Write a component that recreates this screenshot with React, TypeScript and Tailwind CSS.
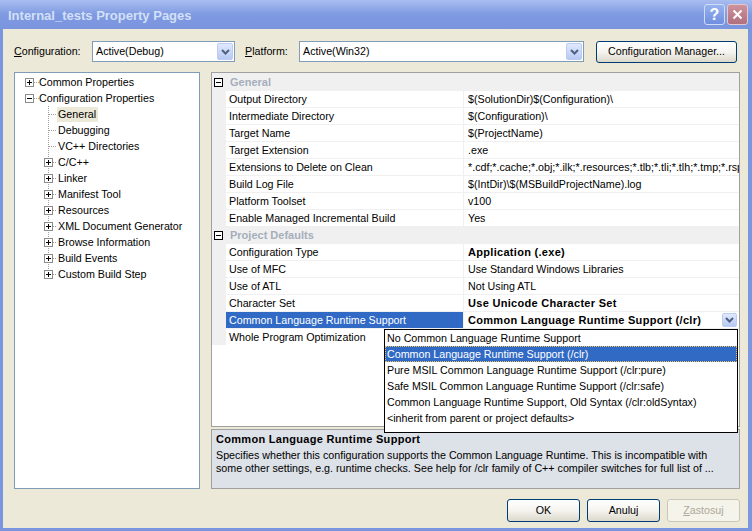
import React from "react";

function Chevron() {
  return (
    <svg width="9" height="6" viewBox="0 0 9 6">
      <path d="M1 1 L4.5 4.5 L8 1" fill="none" stroke="#4d6185" strokeWidth="2" />
    </svg>
  );
}

function TreeRow({
  label,
  level,
  box,
  selected,
  last,
}: {
  label: string;
  level: number;
  box?: "plus" | "minus";
  selected?: boolean;
  last?: boolean;
}) {
  if (level === 0) {
    return (
      <div className="flex h-[16px] items-center">
        <svg width="24" height="16" viewBox="0 0 24 16" className="shrink-0">
          <path d="M19 8.5 H24" stroke="#a0a0a0" strokeDasharray="1 1" />
          <rect x="10.5" y="4.5" width="8" height="8" fill="#fff" stroke="#8c8c8c" />
          <path d="M12 8.5 H17" stroke="#000" />
          {box === "plus" && <path d="M14.5 6 V11" stroke="#000" />}
        </svg>
        <span className="leading-[16px] whitespace-nowrap">{label}</span>
      </div>
    );
  }
  return (
    <div className="flex h-[16px] items-center">
      <svg width="42" height="16" viewBox="0 0 42 16" className="shrink-0">
        <path d={last ? "M33.5 0 V8" : "M33.5 0 V16"} stroke="#a0a0a0" strokeDasharray="1 1" />
        <path d={box ? "M38 8.5 H42" : "M34 8.5 H42"} stroke="#a0a0a0" strokeDasharray="1 1" />
        {box && (
          <>
            <rect x="29.5" y="4.5" width="8" height="8" fill="#fff" stroke="#8c8c8c" />
            <path d="M31 8.5 H36" stroke="#000" />
            <path d="M33.5 6 V11" stroke="#000" />
          </>
        )}
      </svg>
      <span
        className={
          selected
            ? "leading-[15px] whitespace-nowrap bg-[#ece9d8] pl-[1px] pr-[2px]"
            : "leading-[16px] whitespace-nowrap pl-[1px]"
        }
      >
        {label}
      </span>
    </div>
  );
}

const treeItems: {
  label: string;
  level: number;
  box?: "plus" | "minus";
  selected?: boolean;
  last?: boolean;
}[] = [
  { label: "Common Properties", level: 0, box: "plus" },
  { label: "Configuration Properties", level: 0, box: "minus" },
  { label: "General", level: 1, selected: true },
  { label: "Debugging", level: 1 },
  { label: "VC++ Directories", level: 1 },
  { label: "C/C++", level: 1, box: "plus" },
  { label: "Linker", level: 1, box: "plus" },
  { label: "Manifest Tool", level: 1, box: "plus" },
  { label: "Resources", level: 1, box: "plus" },
  { label: "XML Document Generator", level: 1, box: "plus" },
  { label: "Browse Information", level: 1, box: "plus" },
  { label: "Build Events", level: 1, box: "plus" },
  { label: "Custom Build Step", level: 1, box: "plus", last: true },
];

type Row =
  | { cat: string }
  | { name: string; value: string; bold?: boolean; selected?: boolean };

const rows: Row[] = [
  { cat: "General" },
  { name: "Output Directory", value: "$(SolutionDir)$(Configuration)\\" },
  { name: "Intermediate Directory", value: "$(Configuration)\\" },
  { name: "Target Name", value: "$(ProjectName)" },
  { name: "Target Extension", value: ".exe" },
  {
    name: "Extensions to Delete on Clean",
    value: "*.cdf;*.cache;*.obj;*.ilk;*.resources;*.tlb;*.tli;*.tlh;*.tmp;*.rsp",
  },
  { name: "Build Log File", value: "$(IntDir)\\$(MSBuildProjectName).log" },
  { name: "Platform Toolset", value: "v100" },
  { name: "Enable Managed Incremental Build", value: "Yes" },
  { cat: "Project Defaults" },
  { name: "Configuration Type", value: "Application (.exe)", bold: true },
  { name: "Use of MFC", value: "Use Standard Windows Libraries" },
  { name: "Use of ATL", value: "Not Using ATL" },
  { name: "Character Set", value: "Use Unicode Character Set", bold: true },
  {
    name: "Common Language Runtime Support",
    value: "Common Language Runtime Support (/clr)",
    bold: true,
    selected: true,
  },
  { name: "Whole Program Optimization", value: "" },
];

const listItems = [
  "No Common Language Runtime Support",
  "Common Language Runtime Support (/clr)",
  "Pure MSIL Common Language Runtime Support (/clr:pure)",
  "Safe MSIL Common Language Runtime Support (/clr:safe)",
  "Common Language Runtime Support, Old Syntax (/clr:oldSyntax)",
  "<inherit from parent or project defaults>",
];

function GridRow({ row }: { row: Row }) {
  if ("cat" in row) {
    return (
      <div className="flex h-[17px] items-center bg-[#f0f0f0] pt-[1px]">
        <svg width="9" height="9" viewBox="0 0 9 9" className="ml-[2px] shrink-0">
          <rect x="0.5" y="0.5" width="8" height="8" fill="#fff" stroke="#000" />
          <path d="M2 4.5 H7" stroke="#000" />
        </svg>
        <span className="ml-[7px] font-bold text-[11px] text-[#a6aebb] leading-[16px]">{row.cat}</span>
      </div>
    );
  }
  return (
    <div className="flex h-[17px]">
      <div className="w-[14px] shrink-0 bg-[#f0f0f0]" />
      <div className="w-[237px] shrink-0 border-t border-[#f0f0f0]">
        <div
          className={
            row.selected
              ? "h-[16px] leading-[16px] pl-[3px] bg-[#316ac5] text-white whitespace-nowrap"
              : "h-[16px] leading-[16px] pl-[3px] whitespace-nowrap"
          }
        >
          {row.name}
        </div>
      </div>
      <div className="w-[1px] shrink-0 bg-[#f0f0f0]" />
      <div className="flex-1 min-w-0 border-t border-[#f0f0f0] flex items-center">
        <div
          className={
            row.bold
              ? "flex-1 min-w-0 overflow-hidden whitespace-nowrap pl-[4px] leading-[16px] font-bold text-[11px] tracking-[0.3px]"
              : "flex-1 min-w-0 overflow-hidden whitespace-nowrap pl-[4px] leading-[16px]"
          }
        >
          {row.value}
        </div>
        {row.selected && (
          <div className="w-[15px] h-[14px] mr-[2px] shrink-0 flex items-center justify-center rounded-[2px] border border-[#bccbf1] bg-linear-to-b from-[#e1e9fd] to-[#b7c9f3]">
            <Chevron />
          </div>
        )}
      </div>
    </div>
  );
}

export default function App() {
  return (
    <div className="w-[752px] h-[531px] overflow-hidden flex flex-col bg-[#7a96df] font-['Liberation_Sans',Arial,sans-serif] text-[10.7px] text-black select-none">
      {/* Title bar */}
      <div className="h-[29px] shrink-0 flex items-center pl-[8px] pr-[4px] bg-linear-to-b from-[#a9bdf0] via-[#7f9ae1] to-[#7a95de]">
        <span className="flex-1 text-[13px] font-bold text-[#d3e0f7] pt-[2px] whitespace-nowrap">
          Internal_tests Property Pages
        </span>
        <div className="w-[21px] h-[21px] rounded-[3px] border border-[#d0dbf6] bg-linear-to-b from-[#98b2ee] to-[#6f8ee0] flex items-center justify-center text-white font-bold text-[16px] leading-none">
          ?
        </div>
        <div className="ml-[2px] w-[21px] h-[21px] rounded-[3px] border border-[#e2c8cf] bg-linear-to-b from-[#cd939b] to-[#b0707e] flex items-center justify-center">
          <svg width="11" height="11" viewBox="0 0 11 11">
            <path d="M1.5 1.5 L9.5 9.5 M9.5 1.5 L1.5 9.5" stroke="#fff" strokeWidth="2" />
          </svg>
        </div>
      </div>

      {/* Body */}
      <div className="flex-1 flex flex-col ml-[3px] mr-[4px] mb-[3px] bg-[#ece9d8] pt-[12px] pl-[11px]">
        {/* Toolbar */}
        <div className="flex items-center h-[21px]">
          <span className="w-[78px] shrink-0 whitespace-nowrap">
            <span className="underline">C</span>onfiguration:
          </span>
          <div className="w-[143px] h-[21px] shrink-0 flex items-center border border-[#7f9db9] bg-white">
            <span className="flex-1 pl-[3px] whitespace-nowrap">Active(Debug)</span>
            <div className="w-[16px] h-[17px] mr-[1px] flex items-center justify-center rounded-[2px] border border-[#bccbf1] bg-linear-to-b from-[#e1e9fd] to-[#b7c9f3]">
              <Chevron />
            </div>
          </div>
          <span className="ml-[10px] w-[54px] shrink-0 whitespace-nowrap">
            <span className="underline">P</span>latform:
          </span>
          <div className="w-[285px] h-[21px] shrink-0 flex items-center border border-[#7f9db9] bg-white">
            <span className="flex-1 pl-[3px] whitespace-nowrap">Active(Win32)</span>
            <div className="w-[16px] h-[17px] mr-[1px] flex items-center justify-center rounded-[2px] border border-[#bccbf1] bg-linear-to-b from-[#e1e9fd] to-[#b7c9f3]">
              <Chevron />
            </div>
          </div>
          <div className="ml-[12px] w-[141px] h-[22px] shrink-0 flex items-center justify-center rounded-[3px] border border-[#003c74] bg-linear-to-b from-[#ffffff] via-[#f5f4ef] to-[#dcd8cb] whitespace-nowrap">
            Configuration Manager...
          </div>
        </div>

        {/* Main area */}
        <div className="flex mt-[10px] h-[417px]">
          <div className="w-[186px] shrink-0 border border-[#7f9db9] bg-white pt-[1px]">
            {treeItems.map((t) => (
              <TreeRow key={t.label} {...t} />
            ))}
          </div>
          <div className="ml-[11px] w-[529px] shrink-0 flex flex-col">
            <div className="relative h-[355px] shrink-0 border border-[#a0a0a0] bg-white">
              {rows.map((r, i) => (
                <GridRow key={i} row={r} />
              ))}
              <div className="absolute left-[172px] top-[256px] w-[354px] h-[104px] border border-black bg-white z-10">
                {listItems.map((it, i) =>
                  i === 1 ? (
                    <div
                      key={it}
                      className="h-[16px] leading-[14px] pl-[1px] bg-[#316ac5] text-white border border-dotted border-[#e8c060] whitespace-nowrap"
                    >
                      {it}
                    </div>
                  ) : (
                    <div key={it} className="h-[16px] leading-[16px] pl-[2px] whitespace-nowrap">
                      {it}
                    </div>
                  )
                )}
              </div>
            </div>
            <div className="mt-[2px] h-[60px] shrink-0 border border-[#a0a0a0] bg-[#dde1e8] pl-[4px] pt-[2px]">
              <div className="font-bold text-[11px] leading-[14px] tracking-[0.3px] whitespace-nowrap">
                Common Language Runtime Support
              </div>
              <div className="mt-[3px] leading-[13px] whitespace-nowrap">
                Specifies whether this configuration supports the Common Language Runtime. This is incompatible with
              </div>
              <div className="leading-[13px] whitespace-nowrap">
                some other settings, e.g. runtime checks. See help for /clr family of C++ compiler switches for full list of ...
              </div>
            </div>
          </div>
        </div>

        {/* Buttons */}
        <div className="flex justify-end mt-[10px] pr-[8px] gap-[7px]">
          <div className="w-[73px] h-[23px] flex items-center justify-center rounded-[3px] border border-[#003c74] bg-linear-to-b from-[#ffffff] via-[#f5f4ef] to-[#dcd8cb]">
            OK
          </div>
          <div className="w-[73px] h-[23px] flex items-center justify-center rounded-[3px] border border-[#003c74] bg-linear-to-b from-[#ffffff] via-[#f5f4ef] to-[#dcd8cb]">
            Anuluj
          </div>
          <div className="w-[73px] h-[23px] flex items-center justify-center rounded-[3px] border border-[#c9c7ba] bg-[#f5f4ea] text-[#aca899]">
            <span className="underline">Z</span>astosuj
          </div>
        </div>
      </div>
    </div>
  );
}
